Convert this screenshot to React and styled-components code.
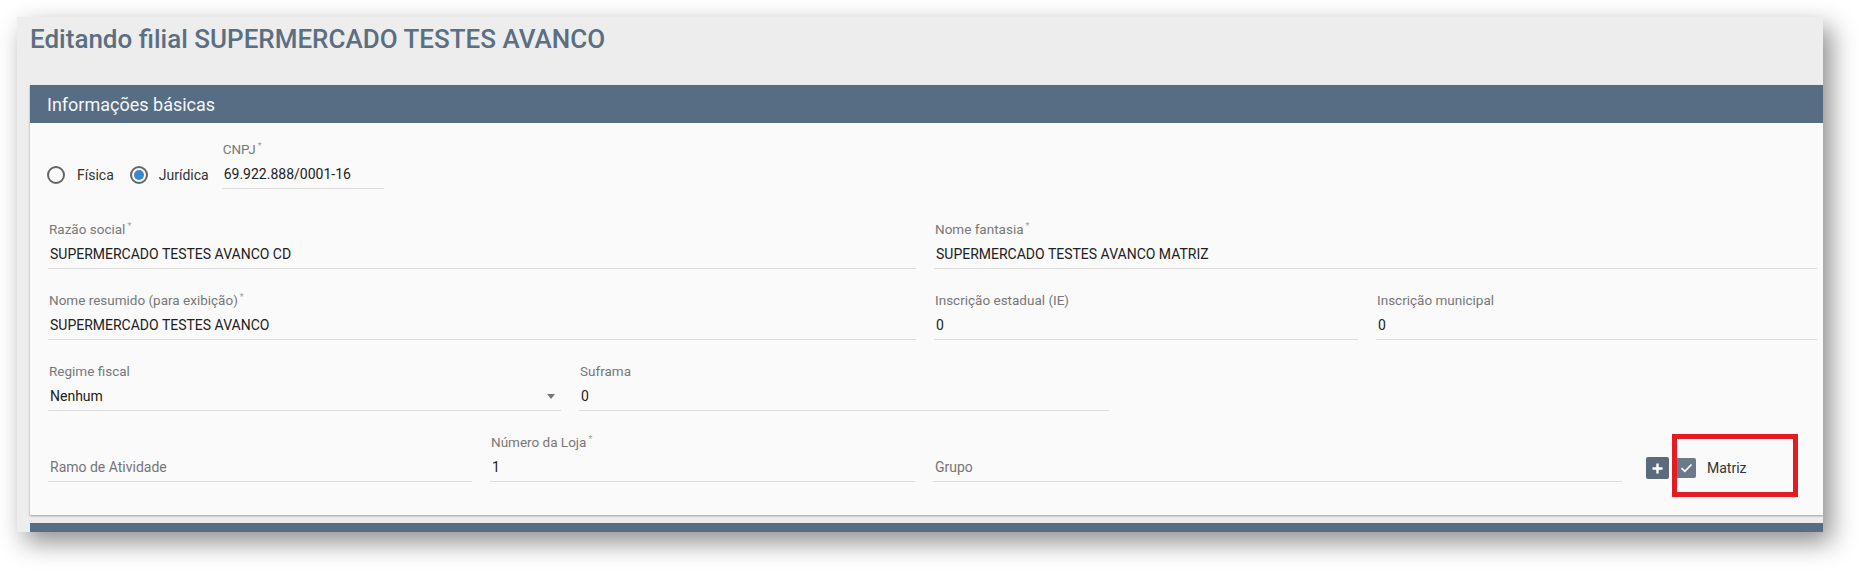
import React from "react";
import styled, { createGlobalStyle } from "styled-components";

const Global = createGlobalStyle`
  html, body { margin: 0; padding: 0; background: #ffffff; }
  body { font-family: Roboto, "Liberation Sans", Arial, sans-serif; color: #212121; }
  * { box-sizing: border-box; }
`;

const Page = styled.div`
  padding: 17px 0 0 17px;
  width: 1871px;
  height: 580px;
`;

const Panel = styled.div`
  width: 1806px;
  height: 515px;
  background: #ededed;
  padding-left: 13px;
  overflow: hidden;
  box-shadow: 8px 10px 24px rgba(0, 0, 0, 0.45);
`;

const Title = styled.h1`
  margin: 0;
  padding: 6px 0 0 0;
  height: 68px;
  font-size: 26px;
  line-height: 32px;
  font-weight: 500;
  color: #5b6e82;
`;

const Card = styled.section`
  background: #fafafa;
  box-shadow: 0 1px 2px rgba(0, 0, 0, 0.35);
  margin-bottom: 8px;
`;

const CardHeader = styled.div`
  height: 38px;
  background: #566d84;
  color: #f4f6f8;
  font-size: 18px;
  display: flex;
  align-items: center;
  padding-left: 17px;
`;

const CardBody = styled.div`
  padding: 18px 6px 33px 18px;
  display: flex;
  flex-direction: column;
  gap: 23px;
`;

const TopRow = styled.div`
  display: flex;
  align-items: flex-start;
  margin-bottom: 9px;
`;

const RadioGroup = styled.div`
  display: flex;
  align-items: center;
  height: 28px;
  margin-top: 20px;
`;

const RadioOption = styled.label`
  display: flex;
  align-items: center;
  font-size: 14px;
  color: #333;
  margin-right: ${(p) => p.$mr}px;
`;

const RadioCircle = styled.span`
  width: 18px;
  height: 18px;
  border-radius: 50%;
  border: 2px solid #666;
  display: inline-flex;
  align-items: center;
  justify-content: center;
  margin: 0 ${(p) => p.$gap}px 0 ${(p) => p.$ml}px;
  &::after {
    content: "";
    width: 10px;
    height: 10px;
    border-radius: 50%;
    background: ${(p) => (p.$checked ? "#3a86cf" : "transparent")};
  }
`;

const Row = styled.div`
  display: grid;
  grid-template-columns: ${(p) => p.$cols};
  column-gap: 18px;
`;

const Field = styled.div`
  display: flex;
  flex-direction: column;
  min-width: 0;
  width: ${(p) => (p.$width ? `${p.$width}px` : "auto")};
`;

const Label = styled.div`
  height: 16px;
  line-height: 16px;
  font-size: 13.5px;
  font-weight: 400;
  color: #787878;
  margin-bottom: 4px;
  padding-left: 1px;
  white-space: nowrap;
`;

const Req = styled.span`
  font-size: 9px;
  color: #9e9e9e;
  vertical-align: top;
  line-height: 10px;
  margin-left: 2px;
`;

const Input = styled.div`
  height: 28px;
  line-height: 27px;
  border-bottom: 1px solid #dcdcdc;
  font-size: 14px;
  color: ${(p) => (p.$placeholder ? "#757575" : "#212121")};
  display: flex;
  align-items: center;
  justify-content: space-between;
  padding-left: 2px;
  padding-right: 6px;
  white-space: nowrap;
`;

const Caret = styled.span`
  width: 0;
  height: 0;
  border-left: 4px solid transparent;
  border-right: 4px solid transparent;
  border-top: 5px solid #777;
`;

const Extras = styled.div`
  position: relative;
  padding: 20px 0 0 6px;
`;

const ExtrasInner = styled.div`
  height: 28px;
  display: flex;
  align-items: center;
`;

const AddButton = styled.button`
  width: 23px;
  height: 22px;
  border: 0;
  border-radius: 2px;
  background: #5b6b7d;
  padding: 0;
  display: inline-flex;
  align-items: center;
  justify-content: center;
  margin-right: 7px;
`;

const CheckBox = styled.span`
  width: 20px;
  height: 20px;
  border-radius: 2px;
  background: #6b7a8a;
  display: inline-flex;
  align-items: center;
  justify-content: center;
  margin-right: 11px;
`;

const CheckLabel = styled.span`
  font-size: 14px;
  color: #333;
`;

const Highlight = styled.div`
  position: absolute;
  left: 32px;
  top: 0px;
  width: 126px;
  height: 63px;
  border: 5px solid #e31b23;
  pointer-events: none;
`;

const NextBar = styled.div`
  height: 20px;
  background: #566d84;
`;

export default function App() {
  return (
    <>
      <Global />
      <Page>
        <Panel>
          <Title>Editando filial SUPERMERCADO TESTES AVANCO</Title>
          <Card>
            <CardHeader>Informações básicas</CardHeader>
            <CardBody>
              <TopRow>
                <RadioGroup>
                  <RadioOption $mr={16}>
                    <RadioCircle $ml={-1} $gap={12} />
                    Física
                  </RadioOption>
                  <RadioOption $mr={13}>
                    <RadioCircle $checked $ml={0} $gap={11} />
                    Jurídica
                  </RadioOption>
                </RadioGroup>
                <Field $width={162}>
                  <Label>
                    CNPJ<Req>*</Req>
                  </Label>
                  <Input>69.922.888/0001-16</Input>
                </Field>
              </TopRow>

              <Row $cols="868fr 883fr">
                <Field>
                  <Label>
                    Razão social<Req>*</Req>
                  </Label>
                  <Input>SUPERMERCADO TESTES AVANCO CD</Input>
                </Field>
                <Field>
                  <Label>
                    Nome fantasia<Req>*</Req>
                  </Label>
                  <Input>SUPERMERCADO TESTES AVANCO MATRIZ</Input>
                </Field>
              </Row>

              <Row $cols="868fr 424fr 441fr">
                <Field>
                  <Label>
                    Nome resumido (para exibição)<Req>*</Req>
                  </Label>
                  <Input>SUPERMERCADO TESTES AVANCO</Input>
                </Field>
                <Field>
                  <Label>Inscrição estadual (IE)</Label>
                  <Input>0</Input>
                </Field>
                <Field>
                  <Label>Inscrição municipal</Label>
                  <Input>0</Input>
                </Field>
              </Row>

              <Row $cols="513fr 530fr 690fr">
                <Field>
                  <Label>Regime fiscal</Label>
                  <Input>
                    Nenhum
                    <Caret />
                  </Input>
                </Field>
                <Field>
                  <Label>Suframa</Label>
                  <Input>0</Input>
                </Field>
                <div />
              </Row>

              <Row $cols="424fr 425fr 689fr 177fr">
                <Field>
                  <Label />
                  <Input $placeholder>Ramo de Atividade</Input>
                </Field>
                <Field>
                  <Label>
                    Número da Loja<Req>*</Req>
                  </Label>
                  <Input>1</Input>
                </Field>
                <Field>
                  <Label />
                  <Input $placeholder>Grupo</Input>
                </Field>
                <Extras>
                  <ExtrasInner>
                    <AddButton aria-label="Adicionar grupo">
                      <svg width="11" height="11" viewBox="0 0 11 11">
                        <path d="M5.5 0.5v10M0.5 5.5h10" stroke="#fff" strokeWidth="2.4" />
                      </svg>
                    </AddButton>
                    <CheckBox>
                      <svg width="13" height="10" viewBox="0 0 13 10">
                        <polyline
                          points="1.5,5.2 4.8,8.3 11.5,1.5"
                          fill="none"
                          stroke="#fff"
                          strokeWidth="1.6"
                        />
                      </svg>
                    </CheckBox>
                    <CheckLabel>Matriz</CheckLabel>
                  </ExtrasInner>
                  <Highlight />
                </Extras>
              </Row>
            </CardBody>
          </Card>
          <NextBar />
        </Panel>
      </Page>
    </>
  );
}
